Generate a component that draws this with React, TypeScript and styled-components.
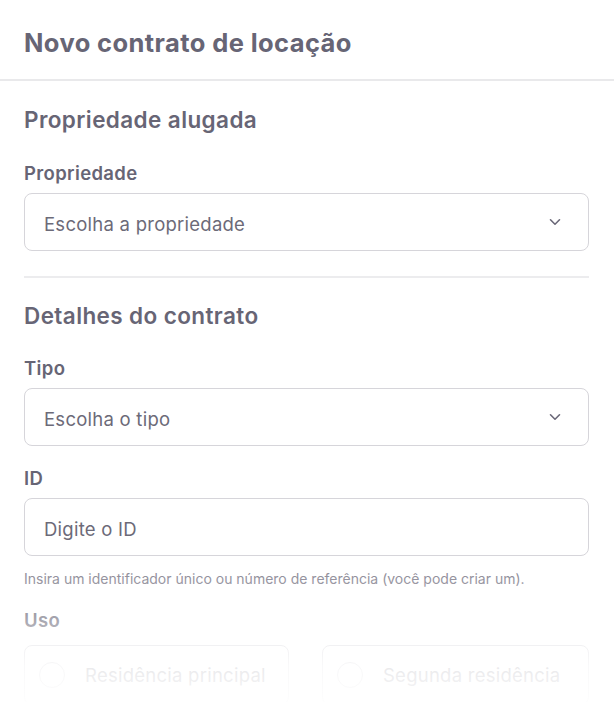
import React from "react";
import styled, { createGlobalStyle } from "styled-components";

const Global = createGlobalStyle`
  html, body { margin: 0; padding: 0; background: #ffffff; }
  body { font-family: Inter, "Noto Sans", "Liberation Sans", sans-serif; -webkit-font-smoothing: antialiased; }
  * { box-sizing: border-box; }
`;

const Page = styled.div`
  position: relative;
  width: 614px;
  height: 702px;
  overflow: hidden;
  background: #fff;
  color: #676575;
`;

const Header = styled.header`
  padding: 27px 24px 20px;
  border-bottom: 2px solid #e9e9eb;
`;

const Title = styled.h1`
  margin: 0;
  font-size: 25.5px;
  line-height: 32px;
  font-weight: 700;
  letter-spacing: 0.4px;
  color: #676575;
`;

const Body = styled.div`
  padding: 0 25px 0 24px;
`;

const Section = styled.section`
  display: flex;
  flex-direction: column;
`;

const SectionTitle = styled.h2<{ $top: number }>`
  margin: ${(p) => p.$top}px 0 0;
  font-size: 22.5px;
  line-height: 28px;
  font-weight: 600;
  letter-spacing: 0.4px;
  color: #676575;
`;

const Label = styled.label<{ $top: number }>`
  display: block;
  margin: ${(p) => p.$top}px 0 8px;
  font-size: 18.5px;
  line-height: 24px;
  font-weight: 600;
  letter-spacing: 0.35px;
  color: #676575;
`;

const Field = styled.div`
  height: 58px;
  border: 1.5px solid #d6d5da;
  border-radius: 8px;
  display: flex;
  align-items: center;
  justify-content: space-between;
  padding: 3px 27px 0 19px;
  font-size: 18.5px;
  letter-spacing: 0.25px;
  color: #6c6a78;
  background: #fff;

  svg {
    margin-top: -4px;
  }
`;

const Divider = styled.hr`
  margin: 25px 0 0;
  border: 0;
  height: 2px;
  background: #ececee;
`;

const Helper = styled.p`
  margin: 13px 0 0;
  font-size: 14px;
  line-height: 20px;
  color: #8f8d99;
`;

const Options = styled.div`
  margin-top: 5px;
  display: grid;
  grid-template-columns: 265px 267px;
  justify-content: space-between;
`;

const OptionCard = styled.div`
  height: 60px;
  border: 1.5px solid #d6d5da;
  border-radius: 8px;
  display: flex;
  align-items: center;
  gap: 20px;
  padding: 0 0 0 14px;
  font-size: 18.5px;
  letter-spacing: 0.25px;
  color: #6c6a78;
`;

const Radio = styled.span`
  width: 26px;
  height: 26px;
  border-radius: 50%;
  border: 1.5px solid #c9c8ce;
  flex: none;
`;

const Fade = styled.div`
  position: absolute;
  left: 0;
  right: 0;
  bottom: 0;
  height: 130px;
  pointer-events: none;
  background: linear-gradient(
    to bottom,
    rgba(255, 255, 255, 0) 0%,
    rgba(255, 255, 255, 0.38) 33%,
    rgba(255, 255, 255, 0.86) 72%,
    rgba(255, 255, 255, 0.95) 100%
  );
`;

const Chevron = () => (
  <svg width="12" height="8" viewBox="0 0 12 8" fill="none">
    <path d="M1.5 1.8 6 6.2l4.5-4.4" stroke="#6a6878" strokeWidth="1.6" strokeLinecap="round" strokeLinejoin="round" />
  </svg>
);

export default function App() {
  return (
    <>
      <Global />
      <Page>
        <Header>
          <Title>Novo contrato de locação</Title>
        </Header>
        <Body>
          <Section>
            <SectionTitle $top={25}>Propriedade alugada</SectionTitle>
            <Label $top={27}>Propriedade</Label>
            <Field>
              <span>Escolha a propriedade</span>
              <Chevron />
            </Field>
          </Section>
          <Divider />
          <Section>
            <SectionTitle $top={24}>Detalhes do contrato</SectionTitle>
            <Label $top={26}>Tipo</Label>
            <Field>
              <span>Escolha o tipo</span>
              <Chevron />
            </Field>
            <Label $top={20}>ID</Label>
            <Field>
              <span>Digite o ID</span>
            </Field>
            <Helper>Insira um identificador único ou número de referência (você pode criar um).</Helper>
            <Label $top={19}>Uso</Label>
            <Options>
              <OptionCard>
                <Radio />
                <span>Residência principal</span>
              </OptionCard>
              <OptionCard>
                <Radio />
                <span>Segunda residência</span>
              </OptionCard>
            </Options>
          </Section>
        </Body>
        <Fade />
      </Page>
    </>
  );
}
